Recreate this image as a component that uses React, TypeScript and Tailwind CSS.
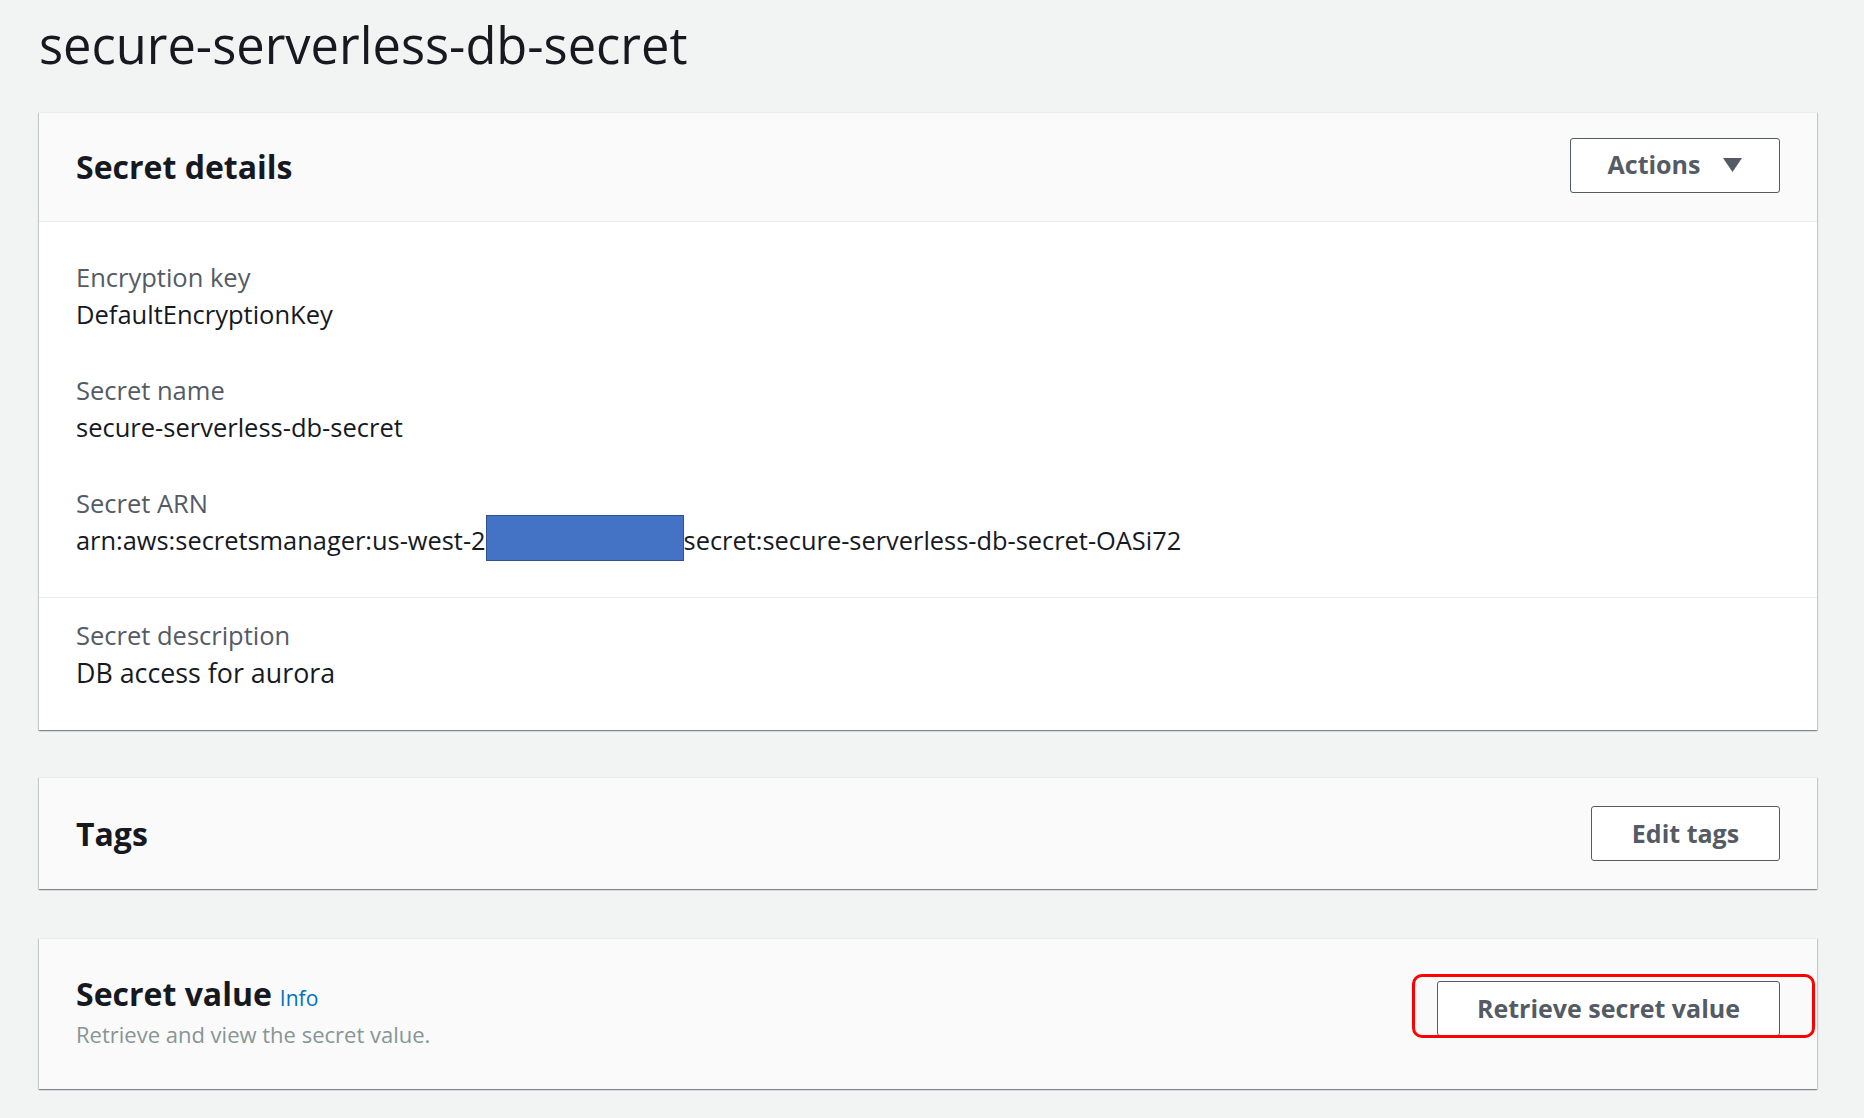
import { ReactNode } from "react";

const cardShadow =
  "shadow-[0_1px_1px_0_rgba(0,28,36,0.3),1px_1px_1px_0_rgba(0,28,36,0.15),-1px_1px_1px_0_rgba(0,28,36,0.15)]";

function Button({ children, width }: { children: ReactNode; width: string }) {
  return (
    <button
      className={`${width} h-[55px] flex items-center justify-center gap-[23px] bg-white border border-[#545b64] rounded-[3px] text-[25px] font-bold text-[#545b64]`}
    >
      {children}
    </button>
  );
}

function Field({ label, children }: { label: string; children: ReactNode }) {
  return (
    <div className="flex flex-col">
      <div className="text-[25.5px] leading-[37px] text-[#545b64]">{label}</div>
      <div className="text-[25.5px] leading-[37px] text-[#16191f]">{children}</div>
    </div>
  );
}

export default function App() {
  return (
    <div
      className="min-h-[1118px] bg-[#f2f3f3] pl-[39px] pr-[47px] pt-[11px] flex flex-col"
      style={{ fontFamily: '"Open Sans", "Noto Sans", sans-serif' }}
    >
      <h1 className="text-[50.6px] leading-[68px] text-[#16191f] mb-[33px]">secure-serverless-db-secret</h1>

      {/* Secret details */}
      <div className={`bg-white ${cardShadow} border-t border-[#eaeded]`}>
        <div className="h-[109px] bg-[#fafafa] border-b border-[#eaeded] flex items-center justify-between px-[37px]">
          <h2 className="text-[32px] font-bold text-[#16191f]">Secret details</h2>
          <div className="mb-[4px]">
            <Button width="w-[210px]">
              <span>Actions</span>
              <svg width="19" height="14" viewBox="0 0 19 14">
                <path d="M0 0 H19 L9.5 14 Z" fill="#545b64" />
              </svg>
            </Button>
          </div>
        </div>
        <div className="px-[37px] pt-[37px] pb-[38px] flex flex-col gap-[39px] border-b border-[#eaeded]">
          <Field label="Encryption key">DefaultEncryptionKey</Field>
          <Field label="Secret name">secure-serverless-db-secret</Field>
          <div className="flex flex-col">
            <div className="text-[25.5px] leading-[37px] text-[#545b64]">Secret ARN</div>
            <div className="h-[37px] flex items-center text-[25.4px] text-[#16191f] whitespace-nowrap">
              <span>arn:aws:secretsmanager:us-west-2</span>
              <div className="w-[198px] h-[46px] shrink-0 mb-[6px] bg-[#4472c4] border border-[#2f528f]" />
              <span>secret:secure-serverless-db-secret-OASi72</span>
            </div>
          </div>
        </div>
        <div className="px-[37px] pt-[19px] pb-[39px]">
          <div className="flex flex-col">
            <div className="text-[25.5px] leading-[37px] text-[#545b64]">Secret description</div>
            <div className="text-[26.8px] leading-[37px] text-[#16191f]">DB access for aurora</div>
          </div>
        </div>
      </div>

      {/* Tags */}
      <div className={`mt-[47px] bg-[#fafafa] ${cardShadow} border-t border-[#eaeded]`}>
        <div className="h-[111px] flex items-center justify-between px-[37px]">
          <h2 className="text-[32px] font-bold text-[#16191f]">Tags</h2>
          <Button width="w-[189px]">Edit tags</Button>
        </div>
      </div>

      {/* Secret value */}
      <div className={`mt-[49px] bg-[#fafafa] ${cardShadow} border-t border-[#eaeded]`}>
        <div className="h-[150px] flex items-center justify-between px-[37px]">
          <div className="flex flex-col mb-[5px]">
            <div className="flex items-baseline gap-[8px]">
              <h2 className="text-[32px] font-bold text-[#16191f] leading-[44px]">Secret value</h2>
              <a className="text-[21px] text-[#0073bb]">Info</a>
            </div>
            <p className="text-[22px] leading-[36px] text-[#879596]">Retrieve and view the secret value.</p>
          </div>
          <div className="relative mb-[11px]">
            <Button width="w-[343px]">Retrieve secret value</Button>
            <div className="absolute -left-[25px] -right-[35px] -top-[7px] -bottom-[2px] border-[3px] border-[#ff0000] rounded-[10px]" />
          </div>
        </div>
      </div>
    </div>
  );
}
